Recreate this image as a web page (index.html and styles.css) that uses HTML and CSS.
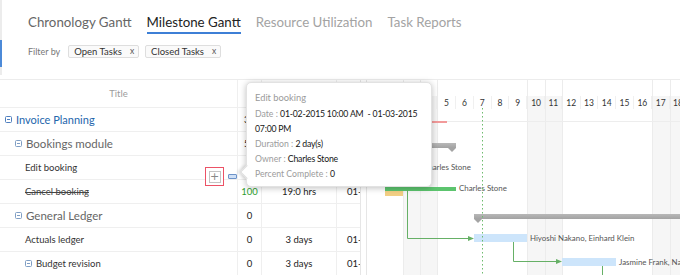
FILE: index.html
```html
<!DOCTYPE html>
<html>
<head>
<meta charset="utf-8">
<link rel="stylesheet" href="styles.css">
</head>
<body>
<div class="page">
  <header class="top">
    <div class="rail"><span class="rail-mark"></span></div>
    <div class="top-main">
      <nav class="tabs">
        <span class="tab">Chronology Gantt</span>
        <span class="tab active">Milestone Gantt</span>
        <span class="tab muted">Resource Utilization</span>
        <span class="tab muted">Task Reports</span>
      </nav>
      <div class="filters">
        <span class="filter-label">Filter by</span>
        <span class="chip">Open Tasks <span class="chip-x">x</span></span>
        <span class="chip">Closed Tasks <span class="chip-x">x</span></span>
      </div>
    </div>
  </header>

  <section class="grid">
    <div class="table">
      <div class="row head">
        <div class="c title">Title</div><div class="c pct"></div><div class="c dur"></div><div class="c start"></div>
      </div>
      <div class="row">
        <div class="c title lvl0"><span class="tog blue"></span><span class="name parent">Invoice Planning</span></div>
        <div class="c pct">33</div><div class="c dur"></div><div class="c start"></div>
      </div>
      <div class="row">
        <div class="c title lvl1"><span class="tog"></span><span class="name group">Bookings module</span></div>
        <div class="c pct">50</div><div class="c dur"></div><div class="c start"></div>
      </div>
      <div class="row">
        <div class="c title lvl2"><span class="name leaf">Edit booking</span></div>
        <div class="c pct">0</div><div class="c dur">2 days</div><div class="c start">01-02-2015</div>
      </div>
      <div class="row">
        <div class="c title lvl2"><span class="name leaf done">Cancel booking</span></div>
        <div class="c pct green">100</div><div class="c dur">19:0 hrs</div><div class="c start">01-02-2015</div>
      </div>
      <div class="row">
        <div class="c title lvl1"><span class="tog"></span><span class="name group">General Ledger</span></div>
        <div class="c pct">0</div><div class="c dur"></div><div class="c start"></div>
      </div>
      <div class="row">
        <div class="c title lvl2"><span class="name leaf">Actuals ledger</span></div>
        <div class="c pct">0</div><div class="c dur">3 days</div><div class="c start">01-07-2015</div>
      </div>
      <div class="row">
        <div class="c title lvl2b"><span class="tog"></span><span class="name leaf">Budget revision</span></div>
        <div class="c pct">0</div><div class="c dur">3 days</div><div class="c start">01-12-2015</div>
      </div>
    </div>
    <div class="splitter"></div>
    <div class="gantt">
      <div class="days">
        <div class="day"><div class="dnum">1</div><div class="dbody"></div></div>
        <div class="day"><div class="dnum">2</div><div class="dbody"></div></div>
        <div class="day we"><div class="dnum">3</div><div class="dbody"></div></div>
        <div class="day we sun"><div class="dnum">4</div><div class="dbody"></div></div>
        <div class="day"><div class="dnum">5</div><div class="dbody"></div></div>
        <div class="day"><div class="dnum">6</div><div class="dbody"></div></div>
        <div class="day"><div class="dnum">7</div><div class="dbody"></div></div>
        <div class="day"><div class="dnum">8</div><div class="dbody"></div></div>
        <div class="day"><div class="dnum">9</div><div class="dbody"></div></div>
        <div class="day we"><div class="dnum">10</div><div class="dbody"></div></div>
        <div class="day we sun"><div class="dnum">11</div><div class="dbody"></div></div>
        <div class="day"><div class="dnum">12</div><div class="dbody"></div></div>
        <div class="day"><div class="dnum">13</div><div class="dbody"></div></div>
        <div class="day"><div class="dnum">14</div><div class="dbody"></div></div>
        <div class="day"><div class="dnum">15</div><div class="dbody"></div></div>
        <div class="day"><div class="dnum">16</div><div class="dbody"></div></div>
        <div class="day we"><div class="dnum">17</div><div class="dbody"></div></div>
        <div class="day we sun"><div class="dnum">18</div><div class="dbody"></div></div>
      </div>
      <div class="canvas">
        <div class="hline"></div>
        <div class="bar red-line"></div>
        <div class="bar summary sum-book"><span class="tri tri-r"></span><span class="tri tri-l"></span></div>
        <div class="bar task edit-bar"></div>
        <span class="blabel lbl-edit">Charles Stone</span>
        <div class="bar done-bar"></div>
        <div class="bar late-bar"></div>
        <span class="blabel lbl-cancel">Charles Stone</span>
        <div class="bar summary sum-ledger"><span class="tri tri-l"></span></div>
        <div class="bar task actuals-bar"></div>
        <span class="blabel lbl-act">Hiyoshi Nakano, Einhard Klein</span>
        <div class="bar task budget-bar"></div>
        <span class="blabel lbl-bud">Jasmine Frank, Nakano</span>
        <svg class="links" width="320" height="200" viewBox="0 0 320 200">
          <line x1="115.5" y1="28" x2="115.5" y2="200" stroke="#6dbb6d" stroke-width="1" stroke-dasharray="1.5 2.5"/>
          <path d="M40.5 110 V158.5 H103" fill="none" stroke="#66b066" stroke-width="1"/>
          <polygon points="101,156 107,158.5 101,161" fill="#66b066"/>
          <path d="M146.5 162 V181.5 H191" fill="none" stroke="#66b066" stroke-width="1"/>
          <polygon points="189,179 195,181.5 189,184" fill="#66b066"/>
          <path d="M235.5 186 V200" fill="none" stroke="#66b066" stroke-width="1"/>
        </svg>
      </div>
    </div>
  </section>

  <div class="row-actions">
    <span class="act-add"><span class="plus">+</span></span>
    <span class="act-drag"></span>
  </div>

  <div class="tooltip">
    <div class="tt-title">Edit booking</div>
    <div class="tt-line nowrap"><span class="k">Date : </span> <span class="v">01-02-2015 10:00 AM&nbsp; - 01-03-2015</span></div>
    <div class="tt-line"><span class="v">07:00 PM</span></div>
    <div class="tt-line"><span class="k">Duration : </span> <span class="v">2 day(s)</span></div>
    <div class="tt-line"><span class="k">Owner : </span><span class="v">Charles Stone</span></div>
    <div class="tt-line"><span class="k">Percent Complete : </span><span class="v">0</span></div>
  </div>
</div>
</body>
</html>
```

FILE: styles.css
```css
* { box-sizing: border-box; }
html, body { margin: 0; padding: 0; }
body {
  font-family: Lato, "Open Sans", sans-serif;
  background: #fff;
  color: #333;
  width: 680px;
  height: 275px;
  overflow: hidden;
}
.page { position: relative; width: 680px; height: 275px; overflow: hidden; }

/* top area */
.top { display: flex; height: 79px; }
.rail { width: 2px; background: #ececec; height: 75px; display: flex; flex-direction: column; }
.rail-mark { display: block; margin-top: 40px; height: 27px; background: #4c8ad8; }
.top-main { flex: 1; padding-left: 26px; }
.tabs { display: flex; gap: 15px; padding-top: 12px; }
.tab {
  font-size: 13.3px;
  line-height: 20px;
  color: #666;
  border-bottom: 2px solid transparent;
}
.tab.active { color: #222; border-bottom-color: #3d7fd6; }
.tab.muted { color: #a3a3a3; }
.filters { display: flex; align-items: center; gap: 6px; margin-top: 11px; height: 13px; }
.filter-label { font-size: 9px; color: #777; margin-right: 2px; }
.chip {
  font-size: 9.5px;
  line-height: 11px;
  color: #333;
  border: 1px solid #dedede;
  background: #fafafa;
  border-radius: 2px;
  padding: 0 4px 0 5px;
  height: 13px;
  display: flex;
  align-items: center;
  gap: 8px;
}
.chip-x { color: #555; font-size: 8.5px; }

/* grid */
.grid { display: flex; border-top: 1px solid #ececec; height: 196px; }
.table { width: 361px; border-right: 1px solid #e6e6e6; flex: none; }
.row { display: flex; height: 24px; border-bottom: 1px solid #efefef; }
.row.head { height: 28px; }
.c { display: flex; align-items: center; justify-content: center; font-size: 9.5px; color: #222; overflow: hidden; white-space: nowrap; }
.c.title { width: 238px; border-right: 1px solid #efefef; justify-content: flex-start; }
.row.head .c.title { justify-content: center; color: #9c9c9c; font-size: 9.5px; }
.c.pct { width: 24px; border-right: 1px solid #efefef; }
.c.pct.green { color: #2e9e2e; }
.c.dur { width: 75px; border-right: 1px solid #efefef; }
.c.start { width: 23px; justify-content: flex-start; padding-left: 10px; }
.lvl0 { padding-left: 5px; }
.lvl1 { padding-left: 15px; }
.lvl2 { padding-left: 25px; }
.lvl2b { padding-left: 25px; }
.tog {
  width: 7px; height: 7px;
  border: 1px solid #7f9ec4;
  border-radius: 1.5px;
  margin-right: 4px;
  flex: none;
  background: linear-gradient(#7f9ec4, #7f9ec4) center / 3px 1px no-repeat;
}
.tog.blue { border-color: #4f7fbf; background: linear-gradient(#4f7fbf, #4f7fbf) center / 3px 1px no-repeat; }
.name.parent { color: #2466ac; font-size: 11px; }
.name.group { color: #666; font-size: 11.5px; }
.name.leaf { color: #333; font-size: 9.5px; }
.name.done { text-decoration: line-through; color: #444; }

.splitter { width: 6px; border-right: 1px solid #e6e6e6; background: #fff; flex: none; }

.gantt { position: relative; flex: 1; overflow: hidden; }
.days { display: grid; grid-template-columns: repeat(18, 17.8px); height: 100%; }
.day { display: flex; flex-direction: column; }
.dnum {
  margin-top: 16px;
  height: 13px;
  font-size: 8.5px;
  color: #333;
  display: flex; align-items: center; justify-content: center;
  border-right: 1px solid #f0f0f0;
}
.dbody { flex: 1; }
.day.we .dnum, .day.we .dbody { background: #f6f6f6; }
.day.we { border-left: 1px solid #ececec; }
.day.we.sun { border-right: 1px solid #ececec; }

.canvas { position: absolute; inset: 0; }
.hline { position: absolute; left: 0; right: 0; top: 41px; height: 1px; background: #ededed; }
.bar { position: absolute; }
.red-line { left: 10px; width: 70px; top: 41px; height: 2px; background: #f29a9a; }
.summary { background: linear-gradient(#b8b8b8, #a2a2a2); height: 5px; }
.sum-book { left: 25px; width: 64px; top: 63px; }
.sum-ledger { left: 107px; width: 240px; top: 134px; }
.tri { position: absolute; top: 5px; width: 0; height: 0; border-left: 4px solid transparent; border-right: 4px solid transparent; border-top: 4px solid #a4a4a4; }
.tri-r { right: 0; }
.tri-l { left: 0; }
.task { background: #cde5fb; height: 8px; }
.edit-bar { left: 25px; width: 28px; top: 83px; }
.done-bar { left: 18px; width: 71px; top: 107px; height: 4px; background: #5cc46e; }
.late-bar { left: 18px; width: 18px; top: 111px; height: 5px; background: #f2cf84; }
.actuals-bar { left: 107px; width: 53px; top: 154px; }
.budget-bar { left: 195px; width: 54px; top: 178px; }
.blabel { position: absolute; font-size: 7.9px; color: #555; white-space: nowrap; line-height: 10px; }
.lbl-edit { left: 56px; top: 82px; }
.lbl-cancel { left: 92px; top: 103px; }
.lbl-act { left: 163px; top: 153px; }
.lbl-bud { left: 252px; top: 177px; }
.links { position: absolute; left: 0; top: 0; }

/* hover actions */
.row-actions { position: absolute; left: 205px; top: 167px; display: flex; align-items: center; gap: 4px; }
.act-add {
  width: 19px; height: 19px;
  border: 1px solid #ec5266;
  background: #fff;
  display: flex; align-items: center; justify-content: center;
}
.plus {
  width: 12px; height: 12px;
  border: 1px solid #c4c4c4;
  color: #888;
  font-size: 11px;
  line-height: 10px;
  text-align: center;
  font-family: "DejaVu Sans", sans-serif;
}
.act-drag { width: 9px; height: 5px; border: 1px solid #6d93c9; background: #cfe0f6; border-radius: 1px; }

/* tooltip */
.tooltip {
  position: absolute;
  left: 246px; top: 82px;
  width: 186px; height: 105px;
  background: #fff;
  border: 1px solid #e2e2e2;
  border-radius: 5px;
  box-shadow: 0 1px 6px rgba(0,0,0,0.25);
  padding: 7px 8px 0 8px;
  font-size: 8.7px;
  line-height: 15px;
}
.tooltip::before {
  content: "";
  position: absolute;
  left: -5px; top: 84px;
  width: 9px; height: 9px;
  background: #fff;
  border-left: 1px solid #ddd;
  border-bottom: 1px solid #ddd;
  transform: rotate(45deg);
  box-shadow: -2px 2px 3px rgba(0,0,0,0.12);
}
.tt-title { color: #9a9a9a; margin-bottom: 1px; font-size: 9.3px; }
.tt-line { color: #222; }
.nowrap { white-space: nowrap; }
.k { color: #9c9c9c; }
.v { color: #151515; letter-spacing: -0.2px; }
```
